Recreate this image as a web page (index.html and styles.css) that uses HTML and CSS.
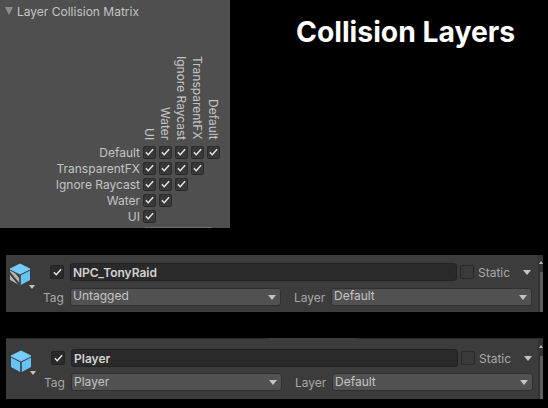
FILE: index.html
```html
<!DOCTYPE html>
<html lang="en">
<head>
<meta charset="utf-8">
<title>Collision Layers</title>
<link rel="stylesheet" href="styles.css">
</head>
<body>
<svg class="defs" width="0" height="0" aria-hidden="true">
  <defs>
    <pattern id="hatch" width="5" height="5" patternUnits="userSpaceOnUse" patternTransform="rotate(-40)">
      <rect width="5" height="5" fill="#3c3c3c"/>
      <rect width="3" height="5" fill="#b4b4b4"/>
    </pattern>
  </defs>
</svg>
<div class="top">
  <section class="panel">
    <div class="foldout"><span class="fold-arrow"></span><span>Layer Collision Matrix</span></div>
    <div class="matrix">
      <div class="col-labels">
        <span class="col">UI</span><span class="col">Water</span><span class="col">Ignore Raycast</span><span class="col">TransparentFX</span><span class="col">Default</span>
      </div>
      <div class="m-row"><span class="row-label">Default</span><i class="cb"><svg viewBox="0 0 10 8"><path d="M1 4.4 3.6 7 9 1"/></svg></i><i class="cb"><svg viewBox="0 0 10 8"><path d="M1 4.4 3.6 7 9 1"/></svg></i><i class="cb"><svg viewBox="0 0 10 8"><path d="M1 4.4 3.6 7 9 1"/></svg></i><i class="cb"><svg viewBox="0 0 10 8"><path d="M1 4.4 3.6 7 9 1"/></svg></i><i class="cb"><svg viewBox="0 0 10 8"><path d="M1 4.4 3.6 7 9 1"/></svg></i></div>
      <div class="m-row"><span class="row-label">TransparentFX</span><i class="cb"><svg viewBox="0 0 10 8"><path d="M1 4.4 3.6 7 9 1"/></svg></i><i class="cb"><svg viewBox="0 0 10 8"><path d="M1 4.4 3.6 7 9 1"/></svg></i><i class="cb"><svg viewBox="0 0 10 8"><path d="M1 4.4 3.6 7 9 1"/></svg></i><i class="cb"><svg viewBox="0 0 10 8"><path d="M1 4.4 3.6 7 9 1"/></svg></i></div>
      <div class="m-row"><span class="row-label">Ignore Raycast</span><i class="cb"><svg viewBox="0 0 10 8"><path d="M1 4.4 3.6 7 9 1"/></svg></i><i class="cb"><svg viewBox="0 0 10 8"><path d="M1 4.4 3.6 7 9 1"/></svg></i><i class="cb"><svg viewBox="0 0 10 8"><path d="M1 4.4 3.6 7 9 1"/></svg></i></div>
      <div class="m-row"><span class="row-label">Water</span><i class="cb"><svg viewBox="0 0 10 8"><path d="M1 4.4 3.6 7 9 1"/></svg></i><i class="cb"><svg viewBox="0 0 10 8"><path d="M1 4.4 3.6 7 9 1"/></svg></i></div>
      <div class="m-row"><span class="row-label">UI</span><i class="cb"><svg viewBox="0 0 10 8"><path d="M1 4.4 3.6 7 9 1"/></svg></i></div>
      <div class="edge"></div>
    </div>
  </section>
  <h1 class="title">Collision Layers</h1>
</div>

<section class="inspector first">
  <div class="cube-wrap">
    <svg class="cube" viewBox="0 0 20 21">
      <path d="M10 0 20 5 10 10 0 5Z" fill="#74cdf9" stroke="#74cdf9" stroke-linejoin="round"/>
      <path d="M0 6.5 9.2 11.2V21L0 16Z" fill="url(#hatch)"/>
      <path d="M10.8 11.2 20 6.5V16L10.8 21Z" fill="#68c3f5"/>
    </svg>
    <span class="tri small"></span>
  </div>
  <div class="fields">
    <div class="line">
      <i class="cb big"><svg viewBox="0 0 10 8"><path d="M1 4.4 3.6 7 9 1"/></svg></i>
      <div class="name">NPC_TonyRaid</div>
      <i class="cb big off"></i>
      <span class="static">Static</span>
      <span class="tri static-arrow"></span>
    </div>
    <div class="line second">
      <span class="lbl tag">Tag</span>
      <div class="drop tag-drop"><span>Untagged</span><span class="tri"></span></div>
      <span class="lbl layer">Layer</span>
      <div class="drop layer-drop"><span>Default</span><span class="tri"></span></div>
    </div>
  </div>
  <div class="scroll"><span class="scroll-up"></span><span class="scroll-thumb"></span></div>
</section>

<section class="inspector last">
  <div class="notch"></div>
  <div class="cube-wrap">
    <svg class="cube" viewBox="0 0 20 21">
      <path d="M10 0 20 5 10 10 0 5Z" fill="#74cdf9" stroke="#74cdf9" stroke-linejoin="round"/>
      <path d="M0 6.5 9.2 11.2V21L0 16Z" fill="#68c3f5"/>
      <path d="M10.8 11.2 20 6.5V16L10.8 21Z" fill="#68c3f5"/>
    </svg>
    <span class="tri small"></span>
  </div>
  <div class="fields">
    <div class="line">
      <i class="cb big"><svg viewBox="0 0 10 8"><path d="M1 4.4 3.6 7 9 1"/></svg></i>
      <div class="name">Player</div>
      <i class="cb big off"></i>
      <span class="static">Static</span>
      <span class="tri static-arrow"></span>
    </div>
    <div class="line second">
      <span class="lbl tag">Tag</span>
      <div class="drop tag-drop"><span>Player</span><span class="tri"></span></div>
      <span class="lbl layer">Layer</span>
      <div class="drop layer-drop"><span>Default</span><span class="tri"></span></div>
    </div>
  </div>
  <div class="scroll"><span class="scroll-up"></span><span class="scroll-thumb"></span></div>
</section>
</body>
</html>
```
FILE: styles.css
```css
* { box-sizing: border-box; }
html, body { margin: 0; padding: 0; }
body {
  width: 548px;
  height: 408px;
  overflow: hidden;
  background: #000;
  font-family: Inter, "Open Sans", sans-serif;
  font-size: 12px;
  color: #c4c4c4;
}
.defs { display: block; height: 0; }

.top { display: flex; height: 228px; }
.panel {
  width: 230px;
  height: 228px;
  background: #4f4f4f;
  padding: 3px 0 0 5px;
  overflow: hidden;
}
.foldout { display: flex; align-items: center; gap: 4px; height: 16px; }
.fold-arrow {
  width: 0; height: 0;
  border-left: 4px solid transparent;
  border-right: 4px solid transparent;
  border-top: 8px solid #8c8c8c;
}
.matrix { margin-top: 35px; }
.col-labels {
  display: flex;
  height: 90px;
  align-items: flex-end;
  padding: 0 0 4px 136px;
}
.col {
  writing-mode: vertical-rl;
  width: 16px;
  line-height: 16px;
  white-space: nowrap;
  text-align: right;
}
.m-row { display: flex; align-items: center; height: 16px; gap: 3px; }
.row-label { width: 135px; padding-top: 1px; text-align: right; line-height: 15px; white-space: nowrap; }
.cb {
  display: flex;
  align-items: center;
  justify-content: center;
  width: 13px;
  height: 13px;
  background: #383838;
  border: 1px solid #2b2b2b;
  border-radius: 2px;
  flex: none;
}
.cb svg { width: 9px; height: 8px; }
.cb path { fill: none; stroke: #e8e8e8; stroke-width: 1.6; }
.edge {
  margin: 3px 0 0 140px;
  width: 67px;
  height: 1px;
  background: #6e6e6e;
}

.title {
  flex: 1;
  margin: 17px 0 0;
  padding-left: 66px;
  font-size: 28.3px;
  line-height: 30px;
  font-weight: 700;
  color: #fff;
  white-space: nowrap;
}

.inspector {
  display: flex;
  position: relative;
  margin-left: 6px;
  width: 537px;
  background: #3c3c3c;
}
.first { margin-top: 27px; height: 57px; padding: 8px 0 0 4px; }
.last { margin-top: 26px; height: 61px; padding: 10px 0 0 5px; border-top: 1px solid #2b2b2b; }
.last .second { margin-top: 6px; }
.last .cube { margin-top: 2px; }
.last .drop { padding-bottom: 1px; }
.notch {
  position: absolute;
  left: 263px;
  top: -1px;
  width: 87px;
  height: 1px;
  background: #3c3c3c;
}
.cube-wrap { position: relative; width: 28px; flex: none; }
.cube { display: block; width: 20px; height: 21px; margin-top: 1px; overflow: visible; }
.tri {
  display: inline-block;
  width: 0; height: 0;
  border-left: 4px solid transparent;
  border-right: 4px solid transparent;
  border-top: 5px solid #c4c4c4;
}
.tri.small {
  position: absolute;
  left: 19px;
  top: 22px;
  border-left-width: 3.5px;
  border-right-width: 3.5px;
  border-top-width: 4px;
}
.fields { width: 500px; flex: none; }
.line { display: flex; align-items: center; height: 18px; }
.second { margin-top: 7px; }
.big { width: 14px; height: 14px; margin-left: 12px; background: #2a2a2a; border-color: #222; }
.big.off { background: #3a3a3a; margin-left: 3px; border-color: #292929; }
.name {
  margin-left: 6px;
  width: 387px;
  height: 18px;
  line-height: 16px;
  padding: 1px 0 0 2px;
  background: #2a2a2a;
  border: 1px solid #212121;
  border-radius: 3px;
  font-weight: 600;
  color: #d2d2d2;
}
.static { margin-left: 4px; width: 45px; color: #a8a8a8; }
.lbl { color: #a8a8a8; padding-top: 1px; }
.tag { margin-left: 5px; width: 27px; }
.layer { margin-left: 13px; width: 37px; }
.drop {
  display: flex;
  align-items: center;
  justify-content: space-between;
  height: 18px;
  padding: 0 2px 2px 2px;
  background: #515151;
  border: 1px solid #303030;
  border-radius: 3px;
  line-height: 14px;
}
.drop .tri { margin: 2px 2px 0 0; }
.tag-drop { width: 211px; }
.layer-drop { width: 201px; }
.scroll {
  position: absolute;
  right: 0;
  top: 0;
  bottom: 0;
  width: 5px;
  display: flex;
  flex-direction: column;
  align-items: flex-end;
  background: #333;
}
.scroll-up {
  margin-top: 6px;
  width: 0; height: 0;
  border-left: 2px solid transparent;
  border-right: 2px solid transparent;
  border-bottom: 3px solid #bdbdbd;
}
.scroll-thumb { margin-top: 8px; flex: 1; width: 3px; background: #5d5d5d; }
```
